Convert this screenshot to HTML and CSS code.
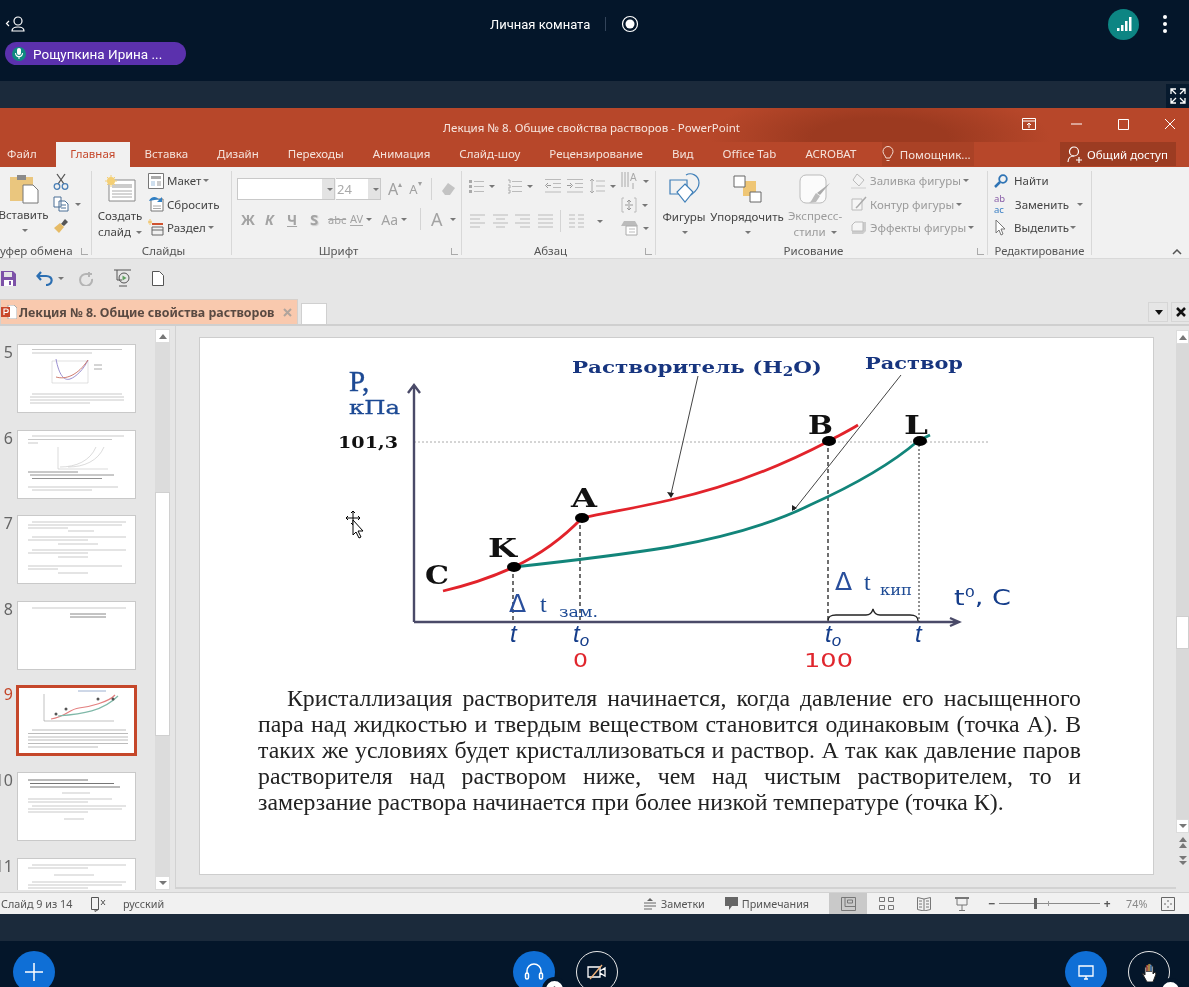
FILE: index.html
```html
<!DOCTYPE HTML>
<html lang="ru">
<head>
<meta charset="utf-8">
<title>Лекция № 8</title>
<link rel="stylesheet" href="styles.css">
</head>
<body>
<div class="app">

	<!-- верхняя панель конференции -->
	<header class="topbar">
		<div class="toprow">
			<svg class="ic-user" width="20" height="18" viewBox="0 0 20 18" fill="none" stroke="#fff" stroke-width="1.2"><path d="M4 6 1.5 8.5 4 11"/><circle cx="13" cy="6" r="4"/><path d="M7 16c0-3 2-4 6-4s6 1 6 4z"/></svg>
			<div class="roomname">Личная комната</div>
			<div class="roomsep"></div>
			<svg width="18" height="18" viewBox="0 0 18 18"><circle cx="9" cy="9" r="7.5" fill="none" stroke="#fff" stroke-width="1.2"/><circle cx="9" cy="9" r="4.5" fill="#fff"/></svg>
			<div class="signal"><svg width="16" height="16" viewBox="0 0 16 16" fill="#fff"><rect x="1" y="12" width="2.5" height="3"/><rect x="5" y="9" width="2.5" height="6"/><rect x="9" y="5" width="2.5" height="10"/><rect x="13" y="1" width="2.5" height="14"/></svg></div>
			<div class="dots"><i></i><i></i><i></i></div>
		</div>
		<div class="pill">
			<span class="pill-mic"><svg width="8" height="11" viewBox="0 0 8 11" fill="#fff"><rect x="2" y="0" width="4" height="7" rx="2"/><path d="M0 5h1c0 4 6 4 6 0h1c0 3-2 4-3.500 4.300V11h-1V9.300C2 9 0 8 0 5z"/></svg></span>
			Рощупкина Ирина ...
		</div>
	</header>
	<div class="band band-top">
		<div class="expand"><svg width="16" height="16" viewBox="0 0 16 16" fill="none" stroke="#fff" stroke-width="1.3"><path d="M1 6V1h5M1 1l5 5M15 6V1h-5M15 1l-5 5M1 10v5h5M1 15l5-5M15 10v5h-5M15 15l-5-5"/></svg></div>
	</div>

	<!-- окно PowerPoint -->
	<section class="window">
		<div class="titlebar">
			<div class="doctitle">Лекция № 8. Общие свойства растворов - PowerPoint</div>
			<div class="winbtns">
				<svg width="14" height="12" viewBox="0 0 14 12" fill="none" stroke="#fff"><path d="M.5 .5h13v11H.5zM.5 3h13M7 10V5M5 7l2-2 2 2"/></svg>
				<svg class="win-min" width="11" height="2" viewBox="0 0 11 2"><path d="M0 1h11" stroke="#fff"/></svg>
				<svg class="win-max" width="11" height="11" viewBox="0 0 11 11"><path d="M.5 .5h10v10H.5z" fill="none" stroke="#fff"/></svg>
				<svg class="win-close" width="12" height="12" viewBox="0 0 12 12"><path d="M1 1l10 10M11 1 1 11" stroke="#fff"/></svg>
			</div>
		</div>
		<nav class="tabs">
			<span class="tab tab-file">Файл</span>
			<span class="tab active">Главная</span>
			<span class="tab">Вставка</span>
			<span class="tab">Дизайн</span>
			<span class="tab">Переходы</span>
			<span class="tab">Анимация</span>
			<span class="tab">Слайд-шоу</span>
			<span class="tab">Рецензирование</span>
			<span class="tab">Вид</span>
			<span class="tab">Office Tab</span>
			<span class="tab">ACROBAT</span>
			<span class="helper">
				<svg width="12" height="17" viewBox="0 0 12 17" fill="none" stroke="#f4ddd3"><path d="M4 12C3 9 1 8 1 5.500a5 5 0 0 1 10 0C11 8 9 9 8 12zM4.500 14.500h3"/></svg>
				Помощник...
			</span>
			<span class="share">
				<svg width="16" height="17" viewBox="0 0 16 17" fill="none" stroke="#fff" stroke-width="1.200"><circle cx="7" cy="5.500" r="4.500"/><path d="M1 16c0-4 3-6 6-6M9 14h6M12 11v6"/></svg>
				Общий доступ
			</span>
		</nav>

		<!-- лента -->
		<div class="ribbon">
			<div class="grp g-clip">
				<div class="grp-body">
					<div class="big b-paste">
						<svg width="30" height="31" viewBox="0 0 30 31"><path d="M1 4h23v24H1z" fill="#eac67e"/><path d="M8 2h9v5H8z" fill="#8a8a8a"/><path d="M14 12h10l5 5v13H14z" fill="#fff" stroke="#777"/></svg>
						<span>Вставить</span>
						<i class="caret"></i>
					</div>
					<div class="clip-col">
						<svg width="16" height="17" viewBox="0 0 16 17" fill="none" stroke="#4a7fb5" stroke-width="1.300"><path d="M4 1l7 10M12 1 5 11" stroke="#555"/><circle cx="4" cy="13.500" r="2.800"/><circle cx="12" cy="13.500" r="2.800"/></svg>
						<span class="copy"><svg width="16" height="16" viewBox="0 0 16 16" fill="#fff" stroke="#4a6f95"><path d="M1 1h7v10H1zM6 5h6l3 3v7H6z"/><path d="M8 9h5M8 12h5" fill="none"/></svg><i class="caret"></i></span>
						<svg width="16" height="15" viewBox="0 0 16 15"><path d="M8 6l4-5 3 3-4 4z" fill="#555"/><path d="M1 10l6-5 4 4-5 6z" fill="#e6bb66"/></svg>
					</div>
				</div>
				<div class="cap cap-clip"><span>Буфер обмена</span><i class="launch"></i></div>
			</div>

			<div class="grp g-slides">
				<div class="grp-body">
					<div class="big b-new">
						<svg width="32" height="27" viewBox="0 0 32 27"><path d="M5 5h26v21H5z" fill="#fff" stroke="#888"/><path d="M8 9h20v4H8z" fill="#ccc"/><path d="M8 16h20M8 19h20M8 22h20" stroke="#aaa"/><circle cx="7" cy="6" r="4" fill="#f4cf74"/><path d="M7 0v12M1 6h12M3 2l8 8M11 2l-8 8" stroke="#f4cf74"/></svg>
						<span>Создать<br>слайд <i class="caret"></i></span>
					</div>
					<div class="small-col">
						<div class="row"><svg width="16" height="16" viewBox="0 0 16 16"><path d="M.5 .5h15v15H.5z" fill="#fff" stroke="#777"/><path d="M3 3h10v3H3z" fill="#aaa"/><path d="M3 8h4v5H3z" fill="#cfdfee"/><path d="M9 8h4v5H9z" fill="#ccc"/></svg>Макет <i class="caret"></i></div>
						<div class="row"><svg width="16" height="16" viewBox="0 0 16 16"><path d="M3 3h12v12H3z" fill="#fff" stroke="#777"/><path d="M5 10h8M5 12.500h8" stroke="#aaa"/><path d="M1 5C3 0 9 0 11 4L9 6h5V1l-2 2" fill="#2f7fc4"/></svg>Сбросить</div>
						<div class="row"><svg width="16" height="17" viewBox="0 0 16 17" fill="none"><path d="M4 8h11v8H4zM4 11h11" stroke="#666"/><path d="M4 5h11" stroke="#d0532f" stroke-width="2"/><path d="M2 0v6M0 2l4 2M4 2 0 4" stroke="#f0c46a"/></svg>Раздел <i class="caret"></i></div>
					</div>
				</div>
				<div class="cap"><span>Слайды</span></div>
			</div>

			<div class="grp g-font">
				<div class="grp-body col">
					<div class="font-top">
						<div class="combo"><span class="combo-field c-name"></span><span class="combo-btn"><i class="caret"></i></span><span class="combo-field c-size">24</span><span class="combo-btn"><i class="caret"></i></span></div>
						<span class="glyph g-a1">A<sup>▴</sup></span>
						<span class="glyph g-a2">A<sup>▾</sup></span>
						<i class="vsep"></i>
						<svg width="15" height="15" viewBox="0 0 15 15"><path d="M1 9l6-8 7 5-5 7H4z" fill="#c3c3c3"/></svg>
					</div>
					<div class="font-bot">
						<b class="fb fb-zh">Ж</b>
						<b class="fb fb-k">К</b>
						<b class="fb fb-ch">Ч</b>
						<b class="fb fb-s">S</b>
						<span class="fb fb-abc">abc</span>
						<span class="fb fb-av">AV</span><i class="caret"></i>
						<span class="fb fb-aa">Aa</span><i class="caret"></i>
						<i class="vsep"></i>
						<span class="fb fb-color">A</span><i class="caret"></i>
					</div>
				</div>
				<div class="cap cap-shift"><span>Шрифт</span><i class="launch"></i></div>
			</div>

			<div class="grp g-para">
				<div class="grp-body">
					<div class="para-main">
						<div class="para-row">
							<svg class="li" width="15" height="15" viewBox="0 0 15 15"><path d="M5 2.500h10M5 7.500h10M5 12.500h10" stroke="#bbb"/><path d="M0 1h3v3H0zM0 6h3v3H0zM0 11h3v3H0z" fill="#aaa"/></svg><i class="caret"></i>
							<svg class="li" width="15" height="15" viewBox="0 0 15 15"><path d="M5 2.500h10M5 7.500h10M5 12.500h10" stroke="#bbb"/><path d="M1 1h2v3M1 6h2v3H1M1 11h2v3H1" fill="none" stroke="#aaa"/></svg><i class="caret"></i>
							<svg class="li" width="16" height="14" viewBox="0 0 16 14"><path d="M0 .5h16M8 4.500h8M8 8.500h8M0 13h16" stroke="#bbb"/><path d="M6 6.500H2M3 4 .5 6.500 3 9" fill="none" stroke="#999"/></svg>
							<svg class="li" width="16" height="14" viewBox="0 0 16 14"><path d="M0 .5h16M8 4.500h8M8 8.500h8M0 13h16" stroke="#bbb"/><path d="M0 6.500h4M3 4l2.500 2.500L3 9" fill="none" stroke="#999"/></svg>
							<svg class="li" width="16" height="16" viewBox="0 0 16 16"><path d="M7 3h9M7 8h9M7 13h9" stroke="#bbb"/><path d="M3 1v14M1 3l2-2 2 2M1 13l2 2 2-2" fill="none" stroke="#aaa"/></svg><i class="caret"></i>
						</div>
						<div class="para-row r2">
							<svg class="al" width="15" height="14" viewBox="0 0 15 14" stroke="#bbb"><path d="M0 1h15M0 5h10M0 9h15M0 13h10"/></svg>
							<svg class="al" width="15" height="14" viewBox="0 0 15 14" stroke="#bbb"><path d="M0 1h15M3 5h9M0 9h15M3 13h9"/></svg>
							<svg class="al" width="15" height="14" viewBox="0 0 15 14" stroke="#bbb"><path d="M0 1h15M5 5h10M0 9h15M5 13h10"/></svg>
							<svg class="al" width="15" height="14" viewBox="0 0 15 14" stroke="#bbb"><path d="M0 1h15M0 5h15M0 9h15M0 13h15"/></svg>
							<i class="vsep"></i>
							<svg class="al" width="15" height="14" viewBox="0 0 15 14" stroke="#bbb"><path d="M0 1h6M9 1h6M0 5h6M9 5h6M0 9h6M9 9h6M0 13h6M9 13h6"/></svg><i class="caret"></i>
						</div>
					</div>
					<div class="para-side">
						<span><svg width="17" height="18" viewBox="0 0 17 18"><path d="M1 0v15M4 0v15M7 0v15" stroke="#aaa"/><text x="9" y="9" font-size="10" fill="#aaa" font-family="Liberation Sans">A</text><path d="M12 11v6" stroke="#aaa"/></svg><i class="caret"></i></span>
						<span><svg width="16" height="16" viewBox="0 0 16 16" fill="none" stroke="#bbb"><path d="M3 1H1v14h2M13 1h2v14h-2" /><path d="M8 3v4M6 5l2-2 2 2M8 13V9M6 11l2 2 2-2M4 8h8" stroke="#999"/></svg><i class="caret"></i></span>
						<span><svg width="17" height="16" viewBox="0 0 17 16"><path d="M0 6l3-5h11l3 5z" fill="#bbb"/><path d="M5 6h11v9H5z" fill="#fff" stroke="#aaa"/><path d="M8 9h6M8 12h6" stroke="#bbb"/></svg><i class="caret"></i></span>
					</div>
				</div>
				<div class="cap cap-shift"><span>Абзац</span><i class="launch"></i></div>
			</div>

			<div class="grp g-draw">
				<div class="grp-body">
					<div class="big b-shapes">
						<svg width="31" height="31" viewBox="0 0 31 31" fill="none" stroke="#3f7fb8" stroke-width="1.200"><path d="M1 7h17v14H1z"/><path d="M17 2c5-3 13 0 13 8 0 5-4 9-8 12"/><path d="M16 11l8 8-8 10-8-10z" fill="#fff"/></svg>
						<span>Фигуры</span>
						<i class="caret"></i>
					</div>
					<div class="big b-arrange">
						<svg width="29" height="28" viewBox="0 0 29 28"><path d="M10 6h13v15H10z" fill="#efc675"/><path d="M1 1h11v11H1zM17 17h11v10H17z" fill="#fff" stroke="#666"/></svg>
						<span>Упорядочить</span>
						<i class="caret"></i>
					</div>
					<div class="big b-styles off">
						<svg width="32" height="31" viewBox="0 0 32 31"><rect x="1" y="1" width="26" height="28" rx="6" fill="#fbfbfb" stroke="#bbb"/><path d="M31 9 21 21l-3-2z" fill="#aaa"/><path d="M17 19l4 3-4 6-7 1c3-2 4-6 7-10z" fill="#bbb"/></svg>
						<span>Экспресс-<br>стили <i class="caret"></i></span>
					</div>
					<div class="small-col off">
						<div class="row"><svg width="16" height="16" viewBox="0 0 16 16"><path d="M6 1l7 6-5 6-6-6z" fill="#f3f3f3" stroke="#bbb"/><path d="M0 14h15v2H0z" fill="#e0e0e0"/></svg>Заливка фигуры <i class="caret"></i></div>
						<div class="row"><svg width="16" height="16" viewBox="0 0 16 16"><path d="M1 3h10v11H1z" fill="#f5f5f5" stroke="#bbb"/><path d="M15 1 7 10l-2 2" stroke="#aaa" fill="none" stroke-width="1.500"/></svg>Контур фигуры <i class="caret"></i></div>
						<div class="row"><svg width="16" height="16" viewBox="0 0 16 16"><path d="M4 2h11v9l-3 3H1V5z" fill="#ccc"/><path d="M4 2h8v9H1V5z" fill="#f5f5f5" stroke="#bbb"/></svg>Эффекты фигуры <i class="caret"></i></div>
					</div>
				</div>
				<div class="cap cap-shift"><span>Рисование</span><i class="launch"></i></div>
			</div>

			<div class="grp g-edit">
				<div class="grp-body">
					<div class="small-col">
						<div class="row"><svg width="14" height="14" viewBox="0 0 14 14" fill="none" stroke="#2f74b5" stroke-width="1.800"><circle cx="9" cy="5" r="3.800"/><path d="M6 8l-5 5" stroke-width="2.500"/></svg>Найти</div>
						<div class="row r-replace"><span class="abac"><b class="ab">ab</b><b class="ac">ac</b></span>Заменить <i class="caret"></i></div>
						<div class="row r-select"><svg width="14" height="18" viewBox="0 0 14 18" fill="#fff" stroke="#777"><path d="M2 1v13l3-3 2 5 2-1-2-5h4z"/></svg>Выделить <i class="caret"></i></div>
					</div>
				</div>
				<div class="cap"><span>Редактирование</span></div>
			</div>
			<svg class="collapse" width="10" height="6" viewBox="0 0 10 6" fill="none" stroke="#555" stroke-width="1.500"><path d="M1 5l4-4 4 4"/></svg>
		</div>

		<!-- панель быстрого доступа -->
		<div class="qat">
			<svg width="15" height="15" viewBox="0 0 15 15"><path d="M0 0h12l3 3v12H0z" fill="#7d52a8"/><path d="M3 1h8v5H3z" fill="#e6e6e6"/><path d="M3 9h9v6H3z" fill="#fff"/><path d="M8 10h2v4H8z" fill="#7d52a8"/></svg>
			<span class="q-undo"><svg width="18" height="15" viewBox="0 0 18 15" fill="none" stroke="#2c6fb2" stroke-width="2.200"><path d="M5 1 1.500 5 5 9M2 5h8c8 0 7 9 0 9"/></svg><i class="caret"></i></span>
			<svg class="q-redo" width="14" height="15" viewBox="0 0 14 15" fill="none" stroke="#b4b4b4" stroke-width="2"><path d="M10 1v5M13 3H8A6 6 0 1 0 13 8"/></svg>
			<svg class="q-show" width="17" height="18" viewBox="0 0 17 18" fill="none" stroke="#555"><path d="M0 1h17M3 1v10h5M5 17h8"/><circle cx="10" cy="9" r="5"/><path d="M8.500 6.500v5l4-2.500z" fill="#5fa05f" stroke="none"/></svg>
			<svg class="q-new" width="12" height="15" viewBox="0 0 12 15"><path d="M.5 .5h7l4 4v10H.5z" fill="#fff" stroke="#555"/></svg>
		</div>

		<!-- вкладки документов -->
		<div class="doctabs">
			<div class="doctab">
				<svg width="16" height="14" viewBox="0 0 16 14"><path d="M7 0h6l3 3v11H7z" fill="#fff" stroke="#aaa"/><path d="M0 2h9v10H0z" fill="#c9472a"/><path d="M3 10V4h2.500a1.700 1.700 0 0 1 0 3.500H3" fill="none" stroke="#fff" stroke-width="1.200"/></svg>
				<b>Лекция № 8. Общие свойства растворов</b>
				<svg class="dt-x" width="9" height="9" viewBox="0 0 9 9"><path d="M1 1l7 7M8 1 1 8" stroke="#b0a49c" stroke-width="2"/></svg>
			</div>
			<div class="newtab"></div>
			<div class="dt-btns">
				<span class="dt-btn"><i class="caret dark"></i></span>
				<span class="dt-btn"><svg width="10" height="10" viewBox="0 0 10 10"><path d="M1 1l8 8M9 1 1 9" stroke="#111" stroke-width="2.500"/></svg></span>
			</div>
		</div>

		<div class="work">
			<!-- миниатюры -->
			<aside class="thumbs">
				<div class="thumb-row">
					<span class="num">5</span>
					<svg class="thumb" viewBox="0 0 117 67"><path d="M14 4.500h90M14 8h60M14 49h90M12 52h94M12 55h94M12 58h60" stroke="#bbb" stroke-width=".8"/><path d="M34 16h36v22H34z" fill="none" stroke="#ccc" stroke-width=".6"/><path d="M38 14c3 16 8 22 14 20s14-10 18-19" fill="none" stroke="#9a8fd0" stroke-width="1"/><path d="M38 32c10 3 22-2 32-17" fill="none" stroke="#cf7d70" stroke-width="1"/><path d="M76 20h8M76 24h8" stroke="#aaa"/></svg>
				</div>
				<div class="thumb-row">
					<span class="num">6</span>
					<svg class="thumb" viewBox="0 0 117 67"><path d="M14 5h92M10 8.500h84M10 12h10M10 56h90M14 59h60" stroke="#bbb" stroke-width=".8"/><path d="M40 16v22h50M42 36c16 0 30-6 36-20M50 36c16 0 30-6 36-20" fill="none" stroke="#ccc" stroke-width=".7"/><path d="M10 41h50M12 44h84M14 47.500h70" stroke="#777" stroke-width=".8"/></svg>
				</div>
				<div class="thumb-row">
					<span class="num">7</span>
					<svg class="thumb" viewBox="0 0 117 67"><path d="M14 6h94M10 9h94M10 12h40M50 15h26M14 21h94M10 24h60M40 28h40M14 34h94M10 37h60M40 41h30M10 50h94M10 53h30M40 57h30" stroke="#bbb" stroke-width=".8"/></svg>
				</div>
				<div class="thumb-row">
					<span class="num">8</span>
					<svg class="thumb" viewBox="0 0 117 67"><path d="M14 6h94" stroke="#bbb" stroke-width=".8"/><path d="M52 12h36M52 15h36" stroke="#888" stroke-width="1"/></svg>
				</div>
				<div class="thumb-row on">
					<span class="num">9</span>
					<svg class="thumb" viewBox="0 0 117 67"><path d="M14 43h94M10 46.500h100M10 50h100M10 53h100M10 56.500h100M10 60h70" stroke="#aaa" stroke-width=".8"/><path d="M26 7v27h70" fill="none" stroke="#999" stroke-width=".6"/><path d="M33 32c15-2 18-10 28-11s30-6 36-13" fill="none" stroke="#e37f7f" stroke-width="1.200"/><path d="M40 29c25-2 45-5 60-20" fill="none" stroke="#7fb8a8" stroke-width="1.200"/><path d="M60 4h28" stroke="#9db0d0" stroke-width="1"/><circle cx="38" cy="27" r="1.500" fill="#555"/><circle cx="48" cy="22" r="1.500" fill="#555"/><circle cx="80" cy="12" r="1.500" fill="#555"/><circle cx="95" cy="12" r="1.500" fill="#555"/></svg>
				</div>
				<div class="thumb-row">
					<span class="num">10</span>
					<svg class="thumb" viewBox="0 0 117 67"><path d="M10 7h60M12 10.500h84M12 14h90" stroke="#666" stroke-width=".9"/><path d="M44 20h28M10 26h84M10 29h60M14 33h94M10 36h94M10 39h60M46 46h20" stroke="#bbb" stroke-width=".8"/></svg>
				</div>
				<div class="thumb-row">
					<span class="num">11</span>
					<svg class="thumb" viewBox="0 0 117 67"><path d="M14 6h94M10 9h60M36 16h40M14 23h94M10 26h94M10 29h60" stroke="#bbb" stroke-width=".8"/></svg>
				</div>
			</aside>
			<div class="thumbscroll">
				<span class="sbtn"><i class="caret up"></i></span>
				<div class="sb-track"><div class="sb-thumb"></div></div>
				<span class="sbtn"><i class="caret"></i></span>
			</div>

			<div class="stage">
				<!-- слайд -->
				<article class="slide">
					<svg class="chart" width="953" height="347" viewBox="200 338 953 347">
						<path d="M414 442H990" stroke="#aaa" stroke-dasharray="2 2" fill="none"/>
						<path d="M414 622V386M408 393l6-8 6 8M414 622H958M950 618l9 4-9 4" fill="none" stroke="#4a4a68" stroke-width="2.400"/>
						<path d="M513 567V622M580 518V622M828 441V622" stroke="#222" stroke-width="1.300" stroke-dasharray="4 3" fill="none"/>
						<path d="M919 441V622" stroke="#222" stroke-width="1" stroke-dasharray="2 2" fill="none"/>
						<path d="M443 591C460 587 490 578 514 567C535 557 560 541 582 518M582 518C610 512 640 507 670 500C715 490 770 472 829 441C840 435 850 430 858 425" fill="none" stroke="#e2232b" stroke-width="2.800"/>
						<path d="M514 567C560 562 620 555 670 547C720 538 770 525 810 505C850 487 890 465 918 441L930 435" fill="none" stroke="#12857a" stroke-width="2.800"/>
						<path d="M698 376 671 494M901 375 794 510" stroke="#444" fill="none"/>
						<path d="M667 492l7 1-3 5zM792 505l5 3-5 3z" fill="#222"/>
						<path d="M828 621c0-5 3-6 8-6h30c4 0 6-2 7-6 1 4 3 6 7 6h30c5 0 8 1 8 6" fill="none" stroke="#222" stroke-width="1.300"/>
						<ellipse cx="514" cy="567" rx="7" ry="5"/>
						<ellipse cx="582" cy="518" rx="7" ry="5"/>
						<ellipse cx="829" cy="441" rx="7" ry="5"/>
						<ellipse cx="920" cy="441" rx="7" ry="5"/>
						<text class="ch-h" x="572" y="373" textLength="250" lengthAdjust="spacingAndGlyphs">Растворитель (H<tspan class="sub" dy="3">2</tspan><tspan dy="-3">O)</tspan></text>
						<text class="ch-h" x="865" y="369" textLength="98" lengthAdjust="spacingAndGlyphs">Раствор</text>
						<text class="ch-p" x="349" y="391">P,</text>
						<text class="ch-u" x="349" y="414" textLength="51" lengthAdjust="spacingAndGlyphs">кПа</text>
						<text class="ch-v" x="338" y="448" textLength="60" lengthAdjust="spacingAndGlyphs">101,3</text>
						<text class="ch-l" x="425" y="584" textLength="24" lengthAdjust="spacingAndGlyphs">C</text>
						<text class="ch-l" x="488" y="557" textLength="29" lengthAdjust="spacingAndGlyphs">K</text>
						<text class="ch-l" x="571" y="507" textLength="26" lengthAdjust="spacingAndGlyphs">A</text>
						<text class="ch-l" x="808" y="434" textLength="25" lengthAdjust="spacingAndGlyphs">B</text>
						<text class="ch-l" x="904" y="434" textLength="24" lengthAdjust="spacingAndGlyphs">L</text>
						<text class="ch-d" x="509" y="612">Δ</text>
						<text class="ch-dt" x="540" y="612">t</text>
						<text class="ch-ds" x="559" y="617" textLength="39" lengthAdjust="spacingAndGlyphs">зам.</text>
						<text class="ch-d" x="835" y="590">Δ</text>
						<text class="ch-dt" x="864" y="590">t</text>
						<text class="ch-ds" x="880" y="595" textLength="32" lengthAdjust="spacingAndGlyphs">кип</text>
						<text class="ch-a" x="954" y="605" textLength="57" lengthAdjust="spacingAndGlyphs">t<tspan class="sup" dy="-8">0</tspan><tspan dy="8">, C</tspan></text>
						<text class="ch-t" x="510" y="642">t</text>
						<text class="ch-t" x="573" y="642">t<tspan class="sub-i" dy="4">o</tspan></text>
						<text class="ch-t" x="825" y="642">t<tspan class="sub-i" dy="4">o</tspan></text>
						<text class="ch-t" x="915" y="642">t</text>
						<text class="ch-r" x="573" y="667" textLength="15" lengthAdjust="spacingAndGlyphs">0</text>
						<text class="ch-r" x="804" y="667" textLength="49" lengthAdjust="spacingAndGlyphs">100</text>
						<g transform="translate(346 511)">
							<path d="M7 0v14M0 7h14M5 2l2-2 2 2M5 12l2 2 2-2M2 5 0 7l2 2M12 5l2 2-2 2" fill="none" stroke="#000"/>
							<path d="M7 9v15l3-3 3 6 2-1-3-6h5z" fill="#fff" stroke="#000"/>
						</g>
					</svg>
					<p class="slide-text">Кристаллизация растворителя начинается, когда давление его насыщенного пара над жидкостью и твердым веществом становится одинаковым (точка А). В таких же условиях будет кристаллизоваться и раствор. А так как давление паров растворителя над раствором ниже, чем над чистым растворителем, то и замерзание раствора начинается при более низкой температуре (точка К).</p>
				</article>
			</div>

			<div class="vscroll">
				<span class="sbtn"><i class="caret up"></i></span>
				<div class="vs-track"><div class="vs-thumb"></div></div>
				<span class="sbtn"><i class="caret"></i></span>
				<span class="vs-page"><i class="caret up"></i><i class="caret up"></i></span>
				<span class="vs-page"><i class="caret"></i><i class="caret"></i></span>
			</div>
		</div>

		<!-- строка состояния -->
		<footer class="status">
			<span class="st-slide">Слайд 9 из 14</span>
			<svg class="st-spell" width="15" height="16" viewBox="0 0 15 16" fill="none" stroke="#555"><path d="M.5 1.500h7v12H.5zM4 13.500v2l3.500-2M10 4l4 5M14 4l-4 5"/></svg>
			<span class="st-lang">русский</span>
			<span class="st-notes"><svg width="12" height="12" viewBox="0 0 12 12"><path d="M6 0 3 3h6z" fill="#666"/><path d="M0 5h12M0 8h12M0 11h8" stroke="#666"/></svg>Заметки</span>
			<span class="st-comm"><svg width="13" height="13" viewBox="0 0 13 13"><path d="M0 0h13v9H7l-3 4V9H0z" fill="#666"/></svg>Примечания</span>
			<span class="view on"><svg width="15" height="14" viewBox="0 0 15 14" fill="none" stroke="#777"><path d="M.5 .5h14v13H.5zM4 .5v9h10.500M6.500 3h5v3h-5z"/></svg></span>
			<span class="view"><svg width="15" height="13" viewBox="0 0 15 13" fill="none" stroke="#777"><path d="M.5 .5h5v4h-5zM9.500 .5h5v4h-5zM.5 8.500h5v4h-5zM9.500 8.500h5v4h-5z"/></svg></span>
			<span class="view"><svg width="14" height="14" viewBox="0 0 14 14" fill="none" stroke="#777"><path d="M.5 .5 7 2l6.500-1.500v12L7 14 .5 12.500zM7 2v12M2 4h3M2 7h3M2 10h3M9 4h3M9 7h3M9 10h3"/></svg></span>
			<span class="view"><svg width="14" height="14" viewBox="0 0 14 14" fill="none" stroke="#777"><path d="M0 1h14" stroke-width="2"/><path d="M2 1v7h10V1M7 8v5M4 13.500h6"/></svg></span>
			<div class="zoom">
				<b>−</b>
				<div class="zoom-track"><i class="zoom-thumb"></i><i class="zoom-tick"></i></div>
				<b>+</b>
			</div>
			<span class="st-pct">74%</span>
			<svg width="14" height="14" viewBox="0 0 14 14" fill="none" stroke="#666"><path d="M.5 .5h13v13H.5zM7 3v2M7 9v2M3 7h2M9 7h2"/></svg>
		</footer>
	</section>

	<div class="band band-bot"></div>

	<!-- нижняя панель -->
	<footer class="actions">
		<span class="cbtn blue"><svg width="20" height="20" viewBox="0 0 20 20"><path d="M10 1v18M1 10h18" stroke="#fff" stroke-width="1.500"/></svg></span>
		<div class="act-mid">
			<span class="cbtn blue"><svg width="20" height="20" viewBox="0 0 20 20" fill="none" stroke="#fff" stroke-width="1.500"><path d="M3 12V9a7 7 0 0 1 14 0v3"/><rect x="1.500" y="11" width="3" height="6" rx="1.500"/><rect x="15.500" y="11" width="3" height="6" rx="1.500"/></svg><i class="badge"></i></span>
			<span class="cbtn ring"><svg width="20" height="16" viewBox="0 0 20 16" fill="none" stroke="#fff" stroke-width="1.300"><path d="M1 3h12v10H1zM13 7l5-3v8l-5-3"/><path d="M3 15 15 1" stroke="#f4b37a"/></svg></span>
		</div>
		<div class="act-right">
			<span class="cbtn blue"><svg width="16" height="15" viewBox="0 0 16 15" fill="none" stroke="#fff" stroke-width="1.300"><path d="M1 1h14v10H1zM6 14h4M8 11v3"/></svg></span>
			<span class="cbtn ring"><svg width="17" height="19" viewBox="0 0 17 19"><path d="M1 10l3 2V4h2v5-7h2v7V1h2v8-6h2v8l2-2 1 2-3 8H6z" fill="#fff" stroke="#222"/><path d="M6 2v6" stroke="#e04a3a"/><path d="M8 1v7" stroke="#f2b233"/><path d="M10 2v6" stroke="#3d8ee0"/></svg><i class="badge"></i></span>
		</div>
	</footer>
</div>
</body>
</html>
```

FILE: styles.css
```css
body { margin: 0; padding: 0; background: #04162a; }
i { font-style: normal; }
svg { display: block; flex: none; }
.app { width: 1189px; height: 987px; overflow: hidden; font-family: "Noto Sans", sans-serif; filter: blur(.3px); }

/* верх */
.topbar { height: 81px; background: #04162a; color: #fff; box-sizing: border-box; }
.toprow { display: flex; align-items: center; height: 48px; padding-left: 5px; }
.roomname { margin-left: 465px; font: 13px Roboto, sans-serif; width: 100px; white-space: nowrap; }
.roomsep { width: 1px; height: 14px; background: #33445a; margin: 0 15px; }
.signal { margin-left: auto; width: 31px; height: 31px; border-radius: 50%; background: #0d8583; display: flex; align-items: center; justify-content: center; margin-right: 24px; }
.dots { display: flex; flex-direction: column; gap: 3px; margin-right: 22px; }
.dots i { width: 4px; height: 4px; border-radius: 50%; background: #fff; }
.pill { display: flex; align-items: center; width: 181px; height: 23px; margin: -6px 0 0 5px; border-radius: 12px; background: #5b31ad; font: 13.5px Roboto, sans-serif; white-space: nowrap; box-sizing: border-box; padding-left: 7px; gap: 7px; }
.pill-mic { width: 14px; height: 14px; border-radius: 50%; background: #0f8a80; display: flex; align-items: center; justify-content: center; }

.band { background: #1b2a3b; height: 27px; }
.band-top { display: flex; justify-content: flex-end; }
.expand { width: 23px; height: 24px; margin-top: 3px; background: #071a2e; display: flex; align-items: center; justify-content: center; }

/* окно */
.window { height: 806px; background: #e6e6e6; display: flex; flex-direction: column; color: #444; }
.titlebar { height: 34px; background: radial-gradient(ellipse 170px 50px at 880px 30px, #9c3a20 40%, rgba(156,58,32,0) 100%), #b7472a; display: flex; align-items: center; flex: none; padding-top: 4px; box-sizing: border-box; position: relative; }
.doctitle { width: 1183px; text-align: center; color: #f7e6df; font-size: 11.5px; white-space: nowrap; }
.winbtns { position: absolute; left: 1022px; top: 10px; display: flex; align-items: center; height: 12px; }
.win-min { margin-left: 35px; }
.win-max { margin-left: 36px; }
.win-close { margin-left: 35px; }
.tabs { height: 25px; background: #b7472a; display: flex; align-items: flex-end; flex: none; color: #f5e3dc; font-size: 11.5px; white-space: nowrap; }
.tab { padding: 0 14.5px; height: 24px; line-height: 24px; margin-bottom: 1px; }
.tab-file { padding: 0 19px 0 7px; }
.tab.active { background: #f1f1f1; color: #c5472a; margin-bottom: 0; height: 25px; }
.helper { display: flex; align-items: center; gap: 6px; height: 24px; margin-left: 11px; background: #aa4226; padding-right: 3px; margin-bottom: 1px; }
.share { display: flex; align-items: center; gap: 4px; height: 24px; width: 116px; box-sizing: border-box; padding-left: 7px; margin-left: auto; margin-right: 13px; background: #9c3c22; color: #fff; margin-bottom: 1px; }

/* лента */
.ribbon { height: 92px; background: #f1f1f1; border-bottom: 1px solid #d9d9d9; display: flex; padding-top: 4px; box-sizing: border-box; flex: none; font-size: 11.5px; position: relative; white-space: nowrap; }
.grp { height: 84px; display: flex; flex-direction: column; border-right: 1px solid #d8d8d8; box-sizing: border-box; flex: none; }
.grp-body { flex: 1; display: flex; min-height: 0; }
.grp-body.col { flex-direction: column; }
.cap { height: 13px; line-height: 17px; text-align: center; position: relative; color: #555; font-size: 11.5px; }
.cap-shift { padding-right: 16px; }
.launch { position: absolute; right: 3px; bottom: 0; width: 6px; height: 6px; border-left: 1px solid #aaa; border-bottom: 1px solid #aaa; }
.g-clip { width: 92px; }
.g-slides { width: 140px; }
.g-slides .cap { padding-left: 4px; }
.g-font { width: 230px; }
.g-para { width: 194px; }
.g-draw { width: 332px; }
.g-edit { width: 104px; }
.g-edit .cap { font-size: 11.2px; }
.cap-clip { text-align: left; margin-left: -7px; }
.big { display: flex; flex-direction: column; align-items: center; text-align: center; line-height: 16px; }
.big span { margin-top: 3px; }
.big > .caret { margin-top: 6px; }
.caret { display: inline-block; width: 0; height: 0; border: 3px solid transparent; border-top: 3px solid #777; border-bottom: 0; vertical-align: middle; margin-left: 2px; }
.caret.up { border-top: 0; border-bottom: 4px solid #777; }
.caret.dark { border-left-width: 4px; border-right-width: 4px; border-top: 5px solid #111; }
.sbtn .caret, .vs-page .caret { border-left-width: 4px; border-right-width: 4px; border-top-width: 4px; margin: 0; }
.sbtn .caret.up, .vs-page .caret.up { border-top-width: 0; border-bottom-width: 5px; }
.off, .off .caret { color: #9b9b9b; }
.b-paste { width: 47px; padding-top: 2px; }
.clip-col { display: flex; flex-direction: column; gap: 6px; margin-left: 6px; padding-top: 2px; }
.copy { display: flex; align-items: center; gap: 4px; }
.b-new { width: 44px; margin-left: 6px; padding-top: 4px; }
.b-new span { margin-top: 6px; }
.small-col { display: flex; flex-direction: column; margin-top: -2px; }
.row { height: 23.5px; display: flex; align-items: center; gap: 3px; }
.row .caret { margin-left: -1px; }
.g-slides .small-col { margin-left: 6px; }
.font-top { display: flex; align-items: center; padding: 7px 0 0 5px; height: 22px; color: #a0a0a0; }
.combo { display: flex; height: 22px; }
.combo-field { background: #fff; border: 1px solid #c9c9c9; box-sizing: border-box; color: #aaa; font-size: 13px; line-height: 20px; padding-left: 1px; }
.c-name { width: 85px; border-right: 0; }
.c-size { width: 32px; border-right: 0; border-left: 0; margin-left: 1px; }
.combo-btn { width: 13px; background: #e3e3e3; border: 1px solid #c9c9c9; border-left: 0; box-sizing: border-box; display: flex; align-items: center; justify-content: center; }
.glyph { font-size: 16px; line-height: 20px; white-space: nowrap; }
.glyph sup { font-size: 8px; vertical-align: 8px; line-height: 0; }
.g-a1 { margin-left: 7px; }
.g-a2 { margin-left: 7px; font-size: 13px; }
.vsep { display: inline-block; width: 1px; height: 22px; background: #d4d4d4; flex: none; }
.font-top .vsep { margin: 0 9px; }
.font-bot { display: flex; align-items: center; padding: 8px 0 0 9px; height: 22px; color: #a3a3a3; }
.fb { font-size: 14px; }
.fb-zh { width: 24px; }
.fb-k { width: 22px; font-style: italic; }
.fb-ch { width: 23px; text-decoration: underline; }
.fb-s { width: 18px; font-size: 15px; text-shadow: 1px 1px 1px #ccc; }
.fb-abc { width: 22px; font-size: 11px; text-decoration: line-through; }
.fb-av { font-size: 11px; border-bottom: 1px solid #aaa; line-height: 13px; }
.fb-aa { margin-left: 9px; font-size: 14px; }
.fb-color { font-size: 18px; margin: 0 4px 0 10px; }
.font-bot .caret, .font-top .caret { margin-left: 3px; }
.font-bot .vsep { margin-left: 13px; }
.para-main { width: 152px; padding-left: 7px; box-sizing: content-box; }
.para-row { display: flex; align-items: center; height: 22px; padding-top: 4px; }
.para-row.r2 { margin-top: 9px; padding-left: 1px; }
.para-row .caret { margin: 0 12px 0 5px; }
.para-row .li + .li { margin-left: 6px; }
.para-row .al { margin-right: 7.500px; }
.para-row .vsep { margin-right: 8px; }
.para-side { display: flex; flex-direction: column; gap: 7px; padding-top: 1px; }
.para-side span { display: flex; align-items: center; gap: 3px; }
.b-shapes { width: 44px; margin-left: 6px; padding-top: 2px; }
.b-shapes span, .b-arrange span { margin-top: 5px; }
.b-arrange { width: 74px; margin-left: 4px; padding-top: 4px; }
.b-arrange span { margin-top: 6px; }
.b-styles { width: 60px; padding-top: 3px; margin-left: 1px; }
.b-styles span { margin-top: 3px; }
.g-draw .small-col { margin-left: 6px; }
.g-edit .small-col { margin-left: 6px; }
.g-edit .row { gap: 6px; }
.abac { display: flex; flex-direction: column; font-size: 9.500px; line-height: 11px; width: 15px; }
.ab { color: #8a5fa8; font-weight: 400; }
.ac { color: #3a7fc4; font-weight: 400; }
.r-replace .caret { margin-left: 2px; }
.r-select .caret { margin-left: -5px; }
.collapse { position: absolute; left: 1172px; top: 82px; }

/* панель быстрого доступа */
.qat { height: 38px; flex: none; display: flex; align-items: center; padding-left: 1px; }
.q-undo { display: flex; align-items: center; gap: 2px; margin-left: 20px; }
.q-redo { margin-left: 15px; }
.q-show { margin-left: 21px; }
.q-new { margin-left: 21px; }

/* вкладки документов */
.doctabs { height: 29px; flex: none; display: flex; align-items: flex-end; border-bottom: 2px solid #cfcfcf; box-sizing: border-box; }
.doctab { width: 298px; height: 25px; background: #f9c9ae; border: 1px solid #d6d0cb; border-bottom: 0; box-sizing: border-box; display: flex; align-items: center; gap: 2px; color: #5a4a42; font-size: 12.4px; white-space: nowrap; }
.dt-x { margin-left: 6px; }
.newtab { width: 26px; height: 21px; background: #fff; border: 1px solid #d0d0d0; border-bottom: 0; box-sizing: border-box; margin-left: 3px; }
.dt-btns { display: flex; gap: 3px; margin-left: auto; align-self: flex-start; padding-top: 5px; margin-right: -2px; }
.dt-btn { width: 20px; height: 20px; border: 1px solid #d6d6d6; box-sizing: border-box; display: flex; align-items: center; justify-content: center; }

/* рабочая область */
.work { flex: 1; display: flex; min-height: 0; }
.thumbs { width: 155px; flex: none; overflow: hidden; padding-top: 19px; box-sizing: border-box; display: flex; flex-direction: column; gap: 18.6px; height: 564px; }
.thumb-row { display: flex; height: 67px; flex: none; }
.num { width: 18px; flex: none; display: flex; justify-content: flex-end; padding-right: 5px; box-sizing: border-box; font-size: 16px; line-height: 14px; color: #666; white-space: nowrap; }
.thumb { width: 117px; height: 67px; background: #fff; box-shadow: 0 0 0 1px #c9c9c9; }
.thumb-row.on .num { color: #c5472a; }
.thumb-row.on .thumb { box-shadow: inset 0 0 0 1px #c5472a, 0 0 0 2px #c5472a; }
.thumbscroll { width: 15px; flex: none; display: flex; flex-direction: column; height: 561px; margin-top: 3px; }
.sbtn { height: 14px; background: #fff; border: 1px solid #dcdcdc; box-sizing: border-box; display: flex; align-items: center; justify-content: center; flex: none; }
.sb-track { flex: 1; background: #dcdcdc; padding-top: 149px; box-sizing: border-box; }
.sb-thumb { height: 244px; background: #fff; border: 1px solid #d0d0d0; box-sizing: border-box; }
.stage { flex: 1; margin: 0 0 3px 5px; border-left: 1px solid #d2d2d2; border-bottom: 2px solid #d2d2d2; padding: 11px 0 0 23px; min-width: 0; box-sizing: border-box; }
.slide { width: 955px; height: 538px; background: #fff; border: 1px solid #cdcdcd; box-sizing: border-box; }
.chart { width: 953px; height: 347px; }
.slide-text { margin: 0 72px 0 58px; font: 23.8px/26px "Liberation Serif", serif; color: #222; text-align: justify; text-indent: 29px; }

.vscroll { width: 13px; flex: none; display: flex; flex-direction: column; margin: 4px 0 0 0; }
.vs-track { height: 475px; background: #d9d9d9; padding-top: 272px; box-sizing: border-box; flex: none; }
.vs-thumb { height: 33px; background: #fff; border: 1px solid #cfcfcf; box-sizing: border-box; }
.vs-page { display: flex; flex-direction: column; align-items: center; gap: 1px; height: 17px; margin-top: 1px; justify-content: center; }

/* Text in charts */
.chart text { fill: #1d4a94; }
.ch-h { font: bold 17px "DejaVu Serif", serif; fill: #17357f !important; }
.ch-h .sub { font-size: 12px; }
.ch-p { font: 29px "Liberation Serif", serif; stroke: #1d4a94; stroke-width: .4px; }
.ch-u { font: 19px "DejaVu Serif", serif; stroke: #1d4a94; stroke-width: .3px; }
.ch-v { font: bold 17px "DejaVu Serif", serif; fill: #111 !important; }
.ch-l { font: bold 26px "DejaVu Serif", serif; fill: #111 !important; }
.ch-d { font: 25px "DejaVu Sans", sans-serif; fill: #2a4f9c !important; }
.ch-dt { font: 24px "Liberation Serif", serif; }
.ch-ds { font: 15px "DejaVu Serif", serif; }
.ch-a { font: 22px "DejaVu Sans", sans-serif; fill: #153d8a !important; }
.ch-a .sup { font-size: 13px; }
.ch-t { font: italic 24px "Liberation Sans", sans-serif; fill: #153d8a !important; }
.ch-t .sub-i { font-size: 17px; }
.ch-r { font: 20px "DejaVu Sans", sans-serif; fill: #e0262d !important; }

/* строка состояния */
.status { height: 22px; flex: none; background: #f1f1f1; border-top: 1px solid #d2d2d2; box-sizing: border-box; display: flex; align-items: center; font-size: 10.8px; color: #555; white-space: nowrap; }
.st-slide { margin-left: 1px; width: 72px; }
.st-spell { margin-left: 18px; }
.st-lang { margin-left: 17px; width: 42px; }
.st-notes { margin-left: 479px; display: flex; align-items: center; gap: 5px; }
.st-comm { margin-left: 20px; display: flex; align-items: center; gap: 4px; }
.view { width: 38px; height: 21px; display: flex; align-items: center; justify-content: center; }
.view.on { background: #c9c9c9; margin-left: 20px; }
.zoom { display: flex; align-items: center; margin-left: 7px; font-size: 12px; gap: 3px; }
.zoom b { width: 8px; text-align: center; }
.zoom-track { width: 101px; height: 1px; background: #8a8a8a; position: relative; }
.zoom-thumb { position: absolute; left: 35px; top: -5px; width: 3px; height: 11px; background: #666; }
.zoom-tick { position: absolute; left: 49px; top: -2px; width: 1px; height: 5px; background: #999; }
.st-pct { margin-left: 15px; width: 35px; color: #888; }

/* низ */
.actions { height: 46px; background: #04162a; display: flex; padding: 10px 19px 0 13px; box-sizing: border-box; align-items: flex-start; overflow: hidden; }
.cbtn { width: 42px; height: 42px; border-radius: 50%; display: flex; align-items: center; justify-content: center; position: relative; flex: none; box-sizing: border-box; }
.blue { background: #0f6fd6; }
.ring { border: 1.5px solid #e8e8e8; }
.badge { position: absolute; left: 29px; top: 26px; width: 17px; height: 17px; border-radius: 50%; background: #fff; border: 4px solid #04162a; }
.badge::before { content: ""; display: block; width: 4px; height: 4px; margin: 6px auto 0; border-left: 1px solid #777; border-top: 1px solid #777; transform: rotate(45deg); }
.act-mid { display: flex; gap: 21px; margin-left: 458px; }
.act-right { display: flex; gap: 21px; margin-left: auto; }
```
